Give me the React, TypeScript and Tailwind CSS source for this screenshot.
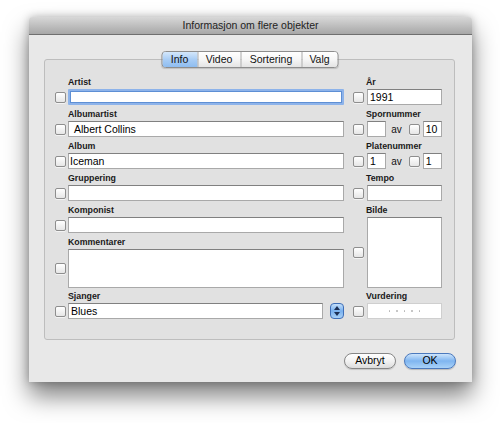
import React from "react";

const FONT = { fontFamily: '"Lucida Grande", "Liberation Sans", sans-serif' };

function Check() {
  return (
    <span className="block w-[11px] h-[11px] shrink-0 rounded-[2px] border border-[#8e8e8e] bg-linear-to-b from-white to-[#e6e6e6] shadow-[0_1px_0_rgba(255,255,255,0.6)]" />
  );
}

function Label({ text }: { text: string }) {
  return (
    <div className="h-[13px] leading-[13px] text-[8.8px] font-bold text-[#1a1a1a] pl-[13px]">{text}</div>
  );
}

function Field({
  value = "",
  className = "",
  pad = "pl-[2px]",
}: {
  value?: string;
  className?: string;
  pad?: string;
}) {
  return (
    <div
      className={`h-[16px] bg-white border border-[#a9a9a9] border-t-[#808080] text-[10.5px] leading-[14px] text-black ${pad} ${className}`}
    >
      {value}
    </div>
  );
}

function Row({ label, children, last = false }: { label: string; children: React.ReactNode; last?: boolean }) {
  return (
    <div className={last ? "" : "mb-[3px]"}>
      <Label text={label} />
      <div className="flex items-center gap-[2px]">
        <Check />
        {children}
      </div>
    </div>
  );
}

function RightRow({ label, children, mb = "mb-[3px]" }: { label: string; children: React.ReactNode; mb?: string }) {
  return (
    <div className={mb}>
      <Label text={label} />
      <div className="flex items-center gap-[3px]">
        <Check />
        {children}
      </div>
    </div>
  );
}

function Tabs() {
  const tabs = [
    { t: "Info", w: "w-[35px]", on: true },
    { t: "Video", w: "w-[43px]", on: false },
    { t: "Sortering", w: "w-[61px]", on: false },
    { t: "Valg", w: "w-[36px]", on: false },
  ];
  return (
    <div className="absolute top-[-9px] left-1/2 -translate-x-1/2 flex h-[17px] rounded-[4px] border border-[#8d8d8d] overflow-hidden shadow-[0_1px_1px_rgba(0,0,0,0.15)]">
      {tabs.map((tab, i) => (
        <div
          key={tab.t}
          className={`${tab.w} flex items-center justify-center text-[10.5px] leading-none text-[#111] ${
            i > 0 ? "border-l border-[#b4b4b4]" : ""
          } ${
            tab.on
              ? "bg-linear-to-b from-[#d4e7fb] via-[#a9cdf5] to-[#8fbdf0]"
              : "bg-linear-to-b from-white via-[#f6f6f6] to-[#e4e4e4]"
          }`}
        >
          {tab.t}
        </div>
      ))}
    </div>
  );
}

function Stepper() {
  return (
    <div className="w-[14px] h-[16px] ml-[5px] rounded-[4px] border border-[#3f6fb8] bg-linear-to-b from-[#c5e0fb] via-[#78b0ee] to-[#a8d0f7] flex flex-col items-center justify-center gap-[2px]">
      <svg width="6" height="4" viewBox="0 0 6 4">
        <path d="M3 0 L6 4 L0 4 Z" fill="#1c2f55" />
      </svg>
      <svg width="6" height="4" viewBox="0 0 6 4">
        <path d="M0 0 L6 0 L3 4 Z" fill="#1c2f55" />
      </svg>
    </div>
  );
}

export default function App() {
  return (
    <div className="w-[500px] h-[423px] bg-white pt-[17px] pl-[29px]" style={FONT}>
      <div className="w-[443px] h-[365px] bg-[#e8e8e8] rounded-t-[4px] flex flex-col shadow-[0_14px_24px_rgba(0,0,0,0.5),0_0_8px_rgba(0,0,0,0.25)]">
        {/* title bar */}
        <div className="h-[18px] shrink-0 rounded-t-[4px] bg-linear-to-b from-[#d8d8d8] to-[#a7a7a7] border-b border-[#6f6f6f] flex items-center justify-center text-[10.5px] text-[#1e1e1e]">
          Informasjon om flere objekter
        </div>

        <div className="pt-[24px] px-[15px]">
          {/* group box */}
          <div className="relative w-[411px] h-[281px] bg-[#e1e1e1] border border-[#bdbdbd] rounded-[3px] pt-[16px] pl-[10px] flex gap-[9px]">
            <Tabs />

            {/* left column */}
            <div className="w-[289px] flex flex-col">
              <Row label="Artist">
                <div className="flex-1 h-[16px] bg-white border-2 border-[#8db3ea] rounded-[1px] shadow-[inset_0_0_0_1px_#5e8fd4]" />
              </Row>
              <Row label="Albumartist">
                <Field value="Albert Collins" className="flex-1" pad="pl-[5px]" />
              </Row>
              <Row label="Album">
                <Field value="Iceman" className="flex-1" pad="pl-[1px]" />
              </Row>
              <Row label="Gruppering">
                <Field className="flex-1" />
              </Row>
              <Row label="Komponist">
                <Field className="flex-1" />
              </Row>
              <div className="mb-[2px]">
                <Label text="Kommentarer" />
                <div className="flex items-center gap-[2px]">
                  <Check />
                  <div className="flex-1 h-[39px] bg-white border border-[#a9a9a9] border-t-[#808080]" />
                </div>
              </div>
              <Row label="Sjanger" last>
                <Field value="Blues" className="flex-1" pad="pl-[2px]" />
                <Stepper />
              </Row>
            </div>

            {/* right column */}
            <div className="w-[89px] flex flex-col">
              <RightRow label="År">
                <Field value="1991" className="w-[75px]" />
              </RightRow>
              <RightRow label="Spornummer">
                <Field className="w-[20px]" />
                <span className="text-[10px] ml-[2px] mr-[4px] text-[#111]">av</span>
                <Check />
                <Field value="10" className="w-[20px]" />
              </RightRow>
              <RightRow label="Platenummer">
                <Field value="1" className="w-[20px]" />
                <span className="text-[10px] ml-[2px] mr-[4px] text-[#111]">av</span>
                <Check />
                <Field value="1" className="w-[20px]" />
              </RightRow>
              <RightRow label="Tempo">
                <Field className="w-[75px]" />
              </RightRow>
              <RightRow label="Bilde" mb="mb-[2px]">
                <div className="w-[75px] h-[71px] bg-white border border-[#a9a9a9] border-t-[#808080]" />
              </RightRow>
              <RightRow label="Vurdering" mb="">
                <div className="w-[75px] h-[16px] bg-white border border-[#cfcfcf] flex items-center justify-center gap-[6px]">
                  {[0, 1, 2, 3, 4].map((i) => (
                    <span key={i} className="block w-[1.5px] h-[1.5px] rounded-full bg-[#b5b5b5]" />
                  ))}
                </div>
              </RightRow>
            </div>
          </div>

          {/* buttons */}
          <div className="flex justify-end gap-[8px] mt-[13px] pr-[1px]">
            <div className="w-[52px] h-[16px] rounded-full border border-[#868686] bg-linear-to-b from-white via-[#f2f2f2] to-[#dcdcdc] flex items-center justify-center text-[10.5px] text-black shadow-[0_1px_1px_rgba(0,0,0,0.15)]">
              Avbryt
            </div>
            <div className="w-[52px] h-[16px] rounded-full border border-[#4b79bd] bg-linear-to-b from-[#cde4fb] via-[#7fb5f0] to-[#a9d2f8] flex items-center justify-center text-[10.5px] text-black shadow-[0_1px_1px_rgba(0,0,0,0.2)]">
              OK
            </div>
          </div>
        </div>
      </div>
    </div>
  );
}
